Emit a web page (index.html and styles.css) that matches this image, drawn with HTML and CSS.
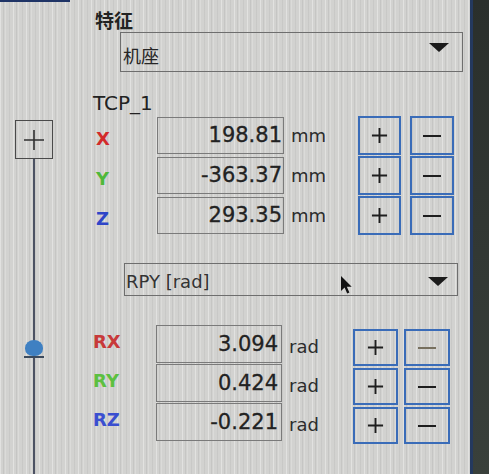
FILE: index.html
```html
<!DOCTYPE html>
<html lang="zh">
<head>
  <meta charset="UTF-8" />
  <title>TCP Pose</title>
  <link rel="stylesheet" href="styles.css">
</head>
<body>
  <div class="device">
    <div class="screen">
      <div class="topbar"></div>
      <div class="main">

        <!-- speed slider -->
        <div class="side">
          <div class="step-btn">
            <svg width="22" height="22" viewBox="0 0 22 22"><path d="M11 1v20M1 11h20"/></svg>
          </div>
          <div class="track"><span class="knob"></span></div>
        </div>

        <div class="panel">
          <div class="caption">特征</div>
          <div class="select feature">
            <span class="select-text">机座</span>
            <span class="caret"></span>
          </div>

          <div class="caption tcp">TCP_1</div>

          <!-- position -->
          <div class="coords">
            <div class="row">
              <span class="axis x">X</span>
              <span class="value">198.81</span>
              <span class="unit">mm</span>
              <span class="btn"><svg class="plus" viewBox="0 0 18 18"><path d="M9 1v16M1 9h16"/></svg></span>
              <span class="btn minus"><svg class="dash" viewBox="0 0 20 4"><path d="M1 2h18"/></svg></span>
            </div>
            <div class="row">
              <span class="axis y">Y</span>
              <span class="value">-363.37</span>
              <span class="unit">mm</span>
              <span class="btn"><svg class="plus" viewBox="0 0 18 18"><path d="M9 1v16M1 9h16"/></svg></span>
              <span class="btn minus"><svg class="dash" viewBox="0 0 20 4"><path d="M1 2h18"/></svg></span>
            </div>
            <div class="row">
              <span class="axis z">Z</span>
              <span class="value">293.35</span>
              <span class="unit">mm</span>
              <span class="btn"><svg class="plus" viewBox="0 0 18 18"><path d="M9 1v16M1 9h16"/></svg></span>
              <span class="btn minus"><svg class="dash" viewBox="0 0 20 4"><path d="M1 2h18"/></svg></span>
            </div>
          </div>

          <div class="select rpy">
            <span class="select-text">RPY [rad]</span>
            <svg class="pointer" width="12" height="19" viewBox="0 0 12 19"><path d="M1 1v15l3.6-3.4 2.6 5.9 2.2-1-2.6-5.8h4.9z"/></svg>
            <span class="caret"></span>
          </div>

          <!-- rotation -->
          <div class="coords rot">
            <div class="row">
              <span class="axis x">RX</span>
              <span class="value">3.094</span>
              <span class="unit">rad</span>
              <span class="btn"><svg class="plus" viewBox="0 0 18 18"><path d="M9 1v16M1 9h16"/></svg></span>
              <span class="btn minus dim"><svg class="dash" viewBox="0 0 20 4"><path d="M1 2h18"/></svg></span>
            </div>
            <div class="row">
              <span class="axis y">RY</span>
              <span class="value">0.424</span>
              <span class="unit">rad</span>
              <span class="btn"><svg class="plus" viewBox="0 0 18 18"><path d="M9 1v16M1 9h16"/></svg></span>
              <span class="btn minus"><svg class="dash" viewBox="0 0 20 4"><path d="M1 2h18"/></svg></span>
            </div>
            <div class="row">
              <span class="axis z">RZ</span>
              <span class="value">-0.221</span>
              <span class="unit">rad</span>
              <span class="btn"><svg class="plus" viewBox="0 0 18 18"><path d="M9 1v16M1 9h16"/></svg></span>
              <span class="btn minus"><svg class="dash" viewBox="0 0 20 4"><path d="M1 2h18"/></svg></span>
            </div>
          </div>
        </div>

      </div>
    </div>
    <div class="bezel"></div>
  </div>
</body>
</html>
```

FILE: styles.css
```css
html, body {
  margin: 0;
  height: 100%;
}
body {
  font-family: "DejaVu Sans", "Noto Sans CJK SC", sans-serif;
  color: #262626;
  background: #2f3431;
  overflow: hidden;
}
.device {
  display: flex;
  height: 474px;
}
.screen {
  width: 470px;
  flex: none;
  display: flex;
  flex-direction: column;
  background-color: #d2d2d0;
  background-image: repeating-linear-gradient(90deg,
    rgba(255,255,255,0.35) 0 1px,
    transparent 1px 3px,
    rgba(90,90,90,0.10) 3px 4px,
    transparent 4px 5px,
    rgba(255,255,255,0.2) 5px 6px,
    transparent 6px 9px,
    rgba(90,90,90,0.08) 9px 10px,
    transparent 10px 13px);
  border-right: 3px solid #24395f;
}
.bezel {
  flex: 1;
  background: linear-gradient(#2a2f2c, #39403b);
}
.topbar {
  width: 70px;
  height: 2px;
  flex: none;
  background: #1f3466;
}
.main {
  display: flex;
  flex: 1;
  min-height: 0;
}

/* slider */
.side {
  width: 70px;
  flex: none;
  padding-left: 15px;
  box-sizing: border-box;
  display: flex;
  flex-direction: column;
}
.step-btn {
  width: 38px;
  height: 39px;
  box-sizing: border-box;
  border: 1px solid #4a4a4a;
  margin-top: 118px;
  display: flex;
  align-items: center;
  justify-content: center;
}
.step-btn path {
  stroke: #303030;
  stroke-width: 1.6;
}
.track {
  position: relative;
  flex: 1;
  width: 2px;
  margin-left: 18px;
  background: #4c5263;
}
.knob {
  position: absolute;
  left: -8px;
  top: 181px;
  width: 18px;
  height: 16px;
  border-radius: 50% 50% 45% 45%;
  background: #3f80c2;
}
.knob::after {
  content: "";
  position: absolute;
  left: -1px;
  bottom: -2px;
  width: 20px;
  height: 2px;
  background: #3c4a5c;
}

/* main panel */
.panel {
  flex: 1;
  padding: 8px 0 0 23px;
}
.caption {
  font-size: 19px;
  font-weight: bold;
  line-height: 22px;
  margin-left: 2px;
  color: #222;
}
.caption.tcp {
  font-weight: normal;
  font-size: 20px;
  line-height: 24px;
  margin: 19px 0 0 0;
}
.select {
  display: flex;
  box-sizing: border-box;
  border: 1px solid #6e6e6e;
}
.select-text {
  flex: 1;
}
.caret {
  width: 0;
  height: 0;
  border-left: 10px solid transparent;
  border-right: 10px solid transparent;
  border-top: 9px solid #1b1b1b;
}
.feature {
  margin-left: 27px;
  width: 343px;
  height: 40px;
  align-items: flex-start;
  padding: 0 13px 0 2px;
  font-size: 18px;
  line-height: 20px;
}
.feature .select-text {
  margin-top: 14px;
}
.feature .caret {
  margin-top: 10px;
}
.rpy {
  position: relative;
  margin: 28px 0 0 31px;
  width: 334px;
  height: 33px;
  align-items: center;
  padding: 3px 9px 0 1px;
  font-size: 18px;
  color: #333;
}
.pointer {
  position: absolute;
  left: 215px;
  top: 11px;
}
.pointer path {
  fill: #111;
}

/* coordinate rows */
.coords {
  margin-top: 1px;
}
.row {
  display: flex;
  align-items: center;
  height: 39px;
}
.row + .row {
  margin-top: 1px;
}
.axis {
  width: 64px;
  padding: 6px 0 0 3px;
  box-sizing: border-box;
  font-size: 18px;
  font-weight: bold;
  line-height: 22px;
}
.axis.x { color: #d22b2b; }
.axis.y { color: #4fb83a; }
.axis.z { color: #2f46c8; }
.value {
  width: 127px;
  height: 37px;
  box-sizing: border-box;
  border: 1px solid #7a7a7a;
  text-align: right;
  font-size: 21px;
  line-height: 35px;
  padding-right: 1px;
  color: #222;
  -webkit-text-stroke: 0.3px #222;
}
.unit {
  width: 74px;
  padding-left: 7px;
  box-sizing: border-box;
  font-size: 18px;
  line-height: 22px;
  color: #2c2c2c;
}
.btn {
  width: 43px;
  height: 39px;
  box-sizing: border-box;
  border: 2px solid #3a6cb8;
  display: flex;
  align-items: center;
  justify-content: center;
}
.btn.minus {
  width: 44px;
  margin-left: 9px;
}
.btn path {
  stroke: #1e1e1e;
  stroke-width: 2;
}
.btn.dim path {
  stroke: #77705f;
}
.plus {
  width: 17px;
  height: 17px;
}
.dash {
  width: 20px;
  height: 4px;
}

/* rotation group sits a bit tighter */
.rot {
  margin-top: 29px;
}
.rot .row {
  align-items: flex-start;
  height: 38px;
}
.rot .axis {
  width: 63px;
  padding: 0;
  line-height: 34px;
}
.rot .axis.x { color: #c83a3a; }
.rot .axis.y { color: #5cc040; }
.rot .axis.z { color: #3a4fd0; }
.rot .value {
  width: 126px;
  height: 38px;
  line-height: 36px;
  padding-right: 3px;
}
.rot .unit {
  width: 71px;
  padding-top: 3px;
  line-height: 38px;
}
.rot .btn {
  width: 45px;
  height: 37px;
  margin-top: 4px;
}
.rot .btn.minus {
  width: 46px;
  margin-left: 6px;
}
```
